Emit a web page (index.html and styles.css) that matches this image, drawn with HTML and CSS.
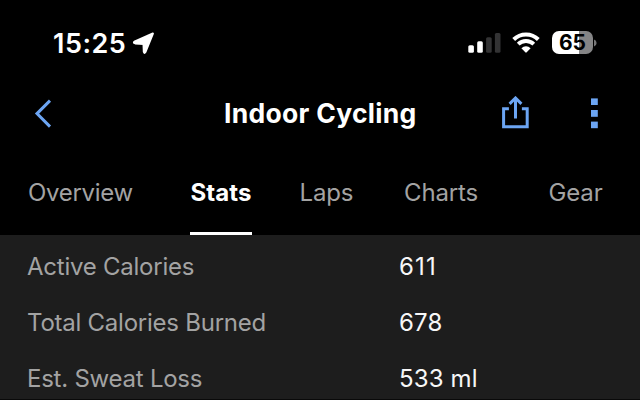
FILE: index.html
```html
<!DOCTYPE html>
<html lang="en">
<head>
<meta charset="utf-8">
<title>Indoor Cycling</title>
<link rel="stylesheet" href="styles.css">
</head>
<body>
<div class="status">
  <span class="time">15:25</span>
  <svg class="location" width="24" height="24" viewBox="0 0 24 24"><path d="M20.9 2.5 L13.4 21 Q12.3 22.9 11.8 20.8 L11.5 13.1 L3.2 12.4 Q0.7 11.8 2.9 10.4 Z" fill="#fff" stroke="#fff" stroke-width="2" stroke-linejoin="round"/></svg>
  <svg class="signal" width="33" height="22" viewBox="0 0 33 22">
    <rect x="0.3" y="13.2" width="5.6" height="7.6" rx="1.5" fill="#fff"/>
    <rect x="9.2" y="9.2" width="5.6" height="11.6" rx="1.5" fill="#fff"/>
    <rect x="18.1" y="5.2" width="5.6" height="15.6" rx="1.5" fill="#333334"/>
    <rect x="26.9" y="1" width="5.6" height="19.8" rx="1.5" fill="#333334"/>
  </svg>
  <svg class="wifi" width="28" height="22" viewBox="0 0 28 22">
    <path d="M1.7 7.5 A17.5 17.5 0 0 1 26.3 7.5" fill="none" stroke="#fff" stroke-width="4"/>
    <path d="M6.2 12.2 A11.1 11.1 0 0 1 21.8 12.2" fill="none" stroke="#fff" stroke-width="3.8"/>
    <path d="M9.4 16.2 A6.7 6.7 0 0 1 18.6 16.2 L14.7 20.3 Q14 21 13.3 20.3 Z" fill="#fff"/>
  </svg>
  <div class="battery"><span>65</span></div>
  <svg class="cap" width="3" height="8" viewBox="0 0 3 8"><path d="M0 0.5 Q2.6 1.4 2.6 4 Q2.6 6.6 0 7.5 Z" fill="#767677"/></svg>
</div>
<header class="header">
  <svg class="back" width="24" height="34" viewBox="0 0 24 34"><path d="M20 3.6 L7 16.6 L20 29.6" fill="none" stroke="#6ca5f3" stroke-width="3"/></svg>
  <h1>Indoor Cycling</h1>
  <svg class="share" width="28" height="36" viewBox="0 0 28 36">
    <path d="M7.9 12.7 H2.6 V30.8 H26.2 V12.7 H20.9" fill="none" stroke="#6ca5f3" stroke-width="3"/>
    <path d="M14.5 22.6 V2.4 M8.6 7.9 L14.5 2 L20.4 7.9" fill="none" stroke="#6ca5f3" stroke-width="3"/>
  </svg>
  <svg class="more" width="7" height="32" viewBox="0 0 7 32" fill="#6ca5f3"><rect y=".4" width="6.8" height="6.6"/><rect y="12" width="6.8" height="6.8"/><rect y="23.6" width="6.8" height="6.6"/></svg>
</header>
<nav class="tabs">
  <span class="tab overview">Overview</span>
  <span class="tab active">Stats</span>
  <span class="tab laps">Laps</span>
  <span class="tab charts">Charts</span>
  <span class="tab gear">Gear</span>
</nav>
<dl class="list">
  <div class="row"><dt>Active Calories</dt><dd class="ones">611</dd></div>
  <div class="row"><dt>Total Calories Burned</dt><dd>678</dd></div>
  <div class="row"><dt>Est. Sweat Loss</dt><dd>533 ml</dd></div>
</dl>
</body>
</html>
```
FILE: styles.css
```css
* { box-sizing: border-box; }
body {
  margin: 0;
  height: 400px;
  overflow: hidden;
  background: #000;
  color: #fff;
  font-family: Inter, "Liberation Sans", sans-serif;
}
svg { display: block; flex: none; }
.status {
  display: flex;
  align-items: center;
  height: 85px;
  padding-left: 53px;
}
.time { width: 79px; padding-top: 2px; font-size: 27px; font-weight: 600; line-height: 32px; letter-spacing: 0.5px; white-space: nowrap; }
.signal { margin-left: 312px; }
.wifi { margin-left: 11px; }
.battery {
  width: 41px;
  height: 23px;
  margin-left: 12px;
  border-radius: 7px;
  background: linear-gradient(90deg, #fff 65%, #858586 65%);
  color: #000;
  font-size: 21px;
  font-weight: 700;
  line-height: 24px;
  text-align: center;
}
.cap { margin-left: 1px; }
.header { display: flex; align-items: center; height: 57px; padding-left: 30px; }
h1 { width: 193px; margin: 0 0 0 170px; padding-bottom: 1px; font-size: 26.5px; font-weight: 700; line-height: 32px; letter-spacing: 0.28px; white-space: nowrap; }
.share { margin-left: 84px; }
.more { margin-left: 62px; }
.tabs {
  display: grid;
  grid-template-columns: 162px 109.5px 104.5px 144.5px auto;
  justify-items: start;
  height: 93px;
  padding-left: 28px;
  font-size: 24px;
  line-height: 30px;
  color: #a3a3a3;
}
.tab { padding-top: 36px; letter-spacing: -0.15px; white-space: nowrap; }
.tab.overview { letter-spacing: -0.3px; }
.tab.active { width: 62px; padding-left: 0.5px; color: #fff; font-weight: 700; letter-spacing: 0.1px; border-bottom: 3px solid #fff; }
.list { margin: 0; height: 165px; padding-top: 4px; background: #1d1d1d; font-size: 24px; border-bottom: 1px solid #090909; }
.row { display: grid; grid-template-columns: 372px auto; height: 56px; padding-left: 27px; line-height: 56px; white-space: nowrap; }
dt { color: #a3a3a3; letter-spacing: -0.24px; }
dd { margin: 0; color: #f7f7f7; letter-spacing: 0.15px; }
dd.ones { letter-spacing: 1.2px; }
```
